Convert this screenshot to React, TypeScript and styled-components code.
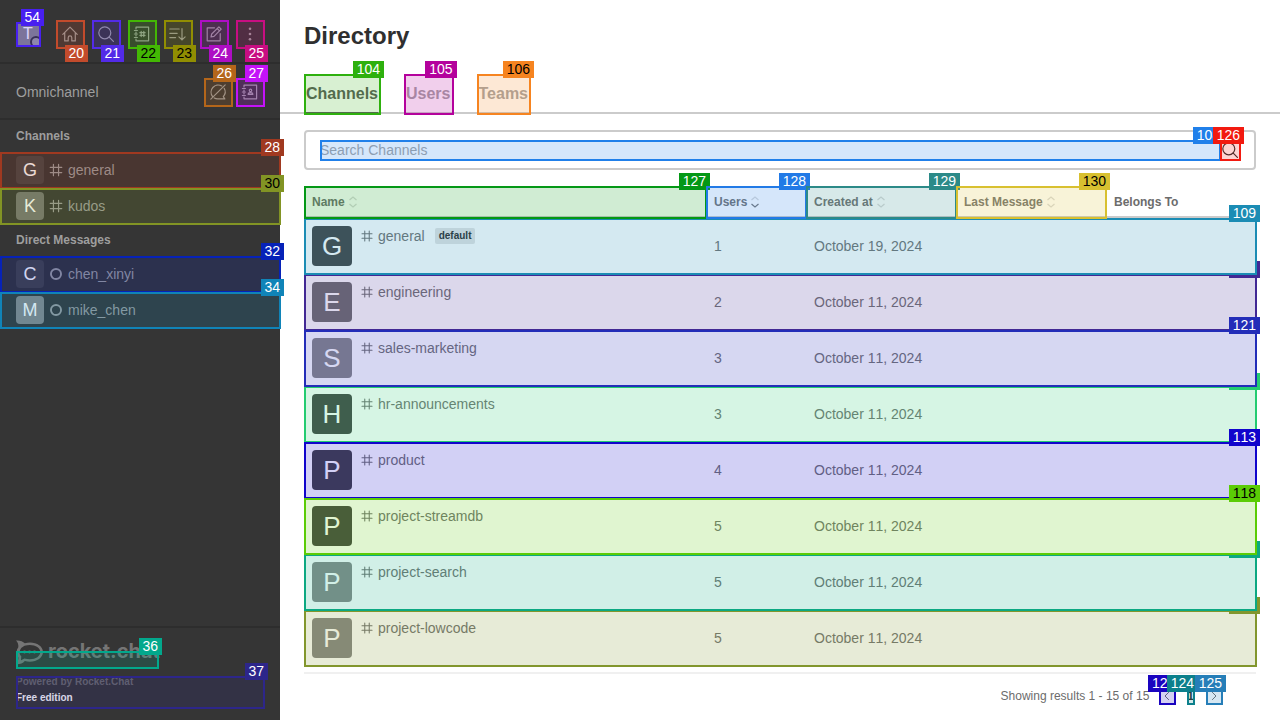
import React from "react";
import styled, { createGlobalStyle, css } from "styled-components";

const GlobalStyle = createGlobalStyle`
  *, *::before, *::after { box-sizing: border-box; }
  body {
    margin: 0;
    background: #ffffff;
    color: #6c6c6c;
    font-family: "Liberation Sans", Arial, sans-serif;
    font-size: 14px;
    line-height: 20px;
  }
  button, input { font: inherit; color: inherit; }
  a { color: inherit; text-decoration: none; }
`;

/* ---------- numbered markers ---------- */

type Side = "above" | "below";

const Outline = styled.span<{ $rgb: string; $top: number }>`
  position: absolute;
  top: ${(p) => p.$top}px;
  right: -1px;
  bottom: -1px;
  left: 0;
  border: 2px solid rgb(${(p) => p.$rgb});
  background: rgba(${(p) => p.$rgb}, 0.19);
  pointer-events: none;
`;

const Tag = styled.span<{ $rgb: string; $dark: boolean; $side: Side; $wide: boolean }>`
  position: absolute;
  right: -5px;
  ${(p) => (p.$side === "above" ? css`bottom: calc(100% - 2px);` : css`top: calc(100% - 2px);`)}
  height: 17px;
  padding: 0 4px 0 ${(p) => (p.$wide ? 4 : 3)}px;
  background: rgb(${(p) => p.$rgb});
  color: ${(p) => (p.$dark ? "#000000" : "#ffffff")};
  font-size: 14px;
  font-weight: 400;
  font-kerning: none;
  line-height: 17px;
  white-space: nowrap;
`;

type MarkProps = { n: number; rgb: string; dark?: boolean; side?: Side; top?: number };

const Mark = ({ n, rgb, dark = false, side = "above", top = 0 }: MarkProps) => (
  <Outline $rgb={rgb} $top={top} aria-hidden="true">
    <Tag $rgb={rgb} $dark={dark} $side={side} $wide={n > 99}>{n}</Tag>
  </Outline>
);

/* ---------- icons ---------- */

const Glyph = styled.svg<{ $size: number }>`
  display: block;
  flex: none;
  width: ${(p) => p.$size}px;
  height: ${(p) => p.$size}px;
  fill: none;
  stroke: currentColor;
  stroke-width: 1.2;
  stroke-linecap: round;
  stroke-linejoin: round;
`;

const icons = {
  home: <path d="M2.8 10.4 10 3.2l7.2 7.2M4.7 8.8v8.1h3.5v-3.2a1.8 1.8 0 0 1 3.6 0v3.2h3.5V8.8" />,
  search: <><circle cx="8.8" cy="8.8" r="6" /><path d="m13.2 13.2 4.2 4.2" /></>,
  directory: (
    <>
      <path d="M4 5V3.2h12.6v13.6H4V15M4 8v1M4 11v1M2.4 6.5h3M2.4 10h3M2.4 13.5h3" />
      <path d="M9.2 7.4v5.2M11.8 7.4v5.2M7.9 8.7h5.2M7.9 11.3h5.2" />
    </>
  ),
  sort: <path d="M1.8 5h9.4M1.8 9.3h7.400M1.8 13.600h5.800M14 4.500v11.4M10.900 12.800 14 15.900l3.100-3.100" />,
  edit: <path d="M10.5 3.8H3.2v13h13V9.5M7 13l.7-3 7.2-7.2 2.3 2.3-7.2 7.2zM13.2 4.5l2.3 2.3" />,
  kebab: (
    <g fill="currentColor" stroke="none">
      <circle cx="10" cy="4.8" r="1.3" /><circle cx="10" cy="10" r="1.3" /><circle cx="10" cy="15.2" r="1.3" />
    </g>
  ),
  chatOff: <path d="M13.800 3.900A7.200 7.200 0 0 0 4.600 14.600M6.200 16a7.200 7.200 0 0 0 3.800.9h6.800l-1.500-2.300a7.200 7.200 0 0 0 .9-8.300M17.200 2.800 2.800 17.200" />,
  contacts: (
    <>
      <path d="M4 5V3.2h12.6v13.6H4V15M4 8v1M4 11v1M2.4 6.5h3M2.4 10h3M2.4 13.5h3" />
      <circle cx="10.5" cy="8.4" r="1.2" /><path d="M8.200 12.400c0-2.400 4.600-2.400 4.600 0z" />
    </>
  ),
  hash: <path d="M6.800 2.800v14.400M13.200 2.800v14.400M2.800 6.800h14.400M2.800 13.200h14.400" strokeWidth="1.500" />,
  offline: <circle cx="10" cy="10" r="6.3" strokeWidth="2.4" />,
  left: <path d="M12 5.5 7.5 10l4.5 4.5" />,
  right: <path d="M8 5.5l4.5 4.5L8 14.5" />,
};

const Icon = ({ name, size = 20 }: { name: keyof typeof icons; size?: number }) => (
  <Glyph $size={size} viewBox="0 0 20 20" aria-hidden="true">{icons[name]}</Glyph>
);

const SortGlyph = styled.svg`
  width: 12px;
  height: 14px;
  fill: none;
  stroke: #6c6c6c;
  stroke-width: 1.2;
`;

const SortIcon = ({ active = false }: { active?: boolean }) => (
  <SortGlyph viewBox="0 0 12 14" aria-hidden="true">
    <path d="M2.5 5 6 2l3.5 3" opacity="0.25" />
    <path d="M2.5 9 6 12l3.5-3" opacity={active ? 0.9 : 0.25} />
  </SortGlyph>
);

/* ---------- shared parts ---------- */

const Avatar = styled.span<{ $size: number; $font: number; $shade: number }>`
  flex: none;
  width: ${(p) => p.$size}px;
  height: ${(p) => p.$size}px;
  border-radius: ${(p) => (p.$size > 24 ? 4 : 2)}px;
  background: rgb(${(p) => `${p.$shade}, ${p.$shade}, ${p.$shade}`});
  color: #ffffff;
  font-size: ${(p) => p.$font}px;
  line-height: ${(p) => p.$size}px;
  text-align: center;
`;

const IconButton = styled.button<{ $size: number }>`
  position: relative;
  display: grid;
  place-items: center;
  flex: none;
  width: ${(p) => p.$size}px;
  height: ${(p) => p.$size}px;
  padding: 0;
  border: 0;
  background: none;
  cursor: pointer;
`;

/* ---------- sidebar ---------- */

const Page = styled.div`
  display: flex;
  min-height: 100vh;
`;

const Sidebar = styled.aside`
  position: relative;
  z-index: 1;
  display: flex;
  flex-direction: column;
  flex: none;
  width: 280px;
  background: #353535;
  color: #9e9e9e;
`;

const TopBar = styled.header`
  display: flex;
  align-items: center;
  justify-content: space-between;
  padding: 20px 16px 16px;
  box-shadow: inset 0 -2px #2d2d2d;
`;

const UserButton = styled.button`
  position: relative;
  display: flex;
  padding: 0;
  border: 0;
  background: none;
`;

const Presence = styled.span`
  position: absolute;
  right: -2px;
  bottom: -2px;
  width: 12px;
  height: 12px;
  border: 2px solid #353535;
  border-radius: 50%;
  background: #9e9e9e;
`;

const Tools = styled.div`
  display: flex;
  gap: 8px;
`;

const Omnichannel = styled.section`
  display: flex;
  align-items: center;
  padding: 14px 16px;
  box-shadow: inset 0 -2px #2d2d2d;
`;

const OmniTitle = styled.span`
  flex: 1;
`;

const OmniTools = styled.div`
  display: flex;
  gap: 4px;
`;

const RoomNav = styled.nav`
  flex: 1;
`;

const GroupTitle = styled.h2`
  margin: 0;
  padding: 6px 16px;
  font-size: 12px;
  line-height: 20px;
`;

const RoomLink = styled.a`
  position: relative;
  display: flex;
  align-items: center;
  gap: 4px;
  height: 36px;
  padding: 0 16px;
`;

const SideFooter = styled.footer`
  padding: 12px 16px;
  border-top: 2px solid #2d2d2d;
`;

const BrandLink = styled.a`
  position: relative;
  display: flex;
  gap: 5px;
  width: 142px;
  height: 28px;
  margin-bottom: 8px;
  color: #757575;
`;

const BrandMark = styled.svg`
  flex: none;
  width: 27px;
  height: 25px;
`;

const BrandName = styled.span`
  font-family: Inter, sans-serif;
  font-size: 20px;
  font-weight: 700;
  line-height: 22px;
`;

const Edition = styled.a`
  position: relative;
  display: flex;
  flex-direction: column;
  gap: 4px;
  padding-bottom: 4px;
  font-size: 10px;
  font-weight: 700;
  line-height: 12px;
`;

const Powered = styled.span`
  color: #6c6c6c;
`;

const EditionName = styled.span`
  color: #ffffff;
`;

/* ---------- directory ---------- */

const Main = styled.main`
  display: flex;
  flex-direction: column;
  flex: 1;
  min-width: 0;
`;

const Title = styled.h1`
  margin: 0;
  padding: 20px 24px 22px;
  color: #2f2f2f;
  font-size: 24px;
  line-height: 32px;
`;

const TabBar = styled.div`
  display: flex;
  gap: 24px;
  padding: 0 24px;
  box-shadow: inset 0 -2px #cbcbcb;
`;

const Tab = styled.button<{ $selected?: boolean }>`
  position: relative;
  height: 40px;
  padding: 0;
  border: 2px solid transparent;
  border-bottom-color: ${(p) => (p.$selected ? "#5c5c5c" : "transparent")};
  background: none;
  color: ${(p) => (p.$selected ? "#5c5c5c" : "#a6a6a6")};
  font-size: 16px;
  font-weight: 700;

  & > span { inset: -2px -3px -3px -2px; }
`;

const Content = styled.div`
  display: flex;
  flex-direction: column;
  flex: 1;
  gap: 16px;
  padding: 16px 24px 6px;
`;

const SearchBox = styled.div`
  display: flex;
  padding: 8px 14px;
  border: 2px solid #cbcbcb;
  border-radius: 4px;
  color: #2f2f2f;
`;

const SearchField = styled.label`
  position: relative;
  display: flex;
  flex: 1;
`;

const SearchInput = styled.input`
  flex: 1;
  min-width: 0;
  height: 20px;
  padding: 0;
  border: 0;
  outline: 0;
  background: none;

  &::placeholder { color: #a6a6a6; opacity: 1; }
`;

const Table = styled.table`
  width: 100%;
  border-spacing: 0;
  table-layout: fixed;
`;

const HeadCell = styled.th<{ $width?: number }>`
  width: ${(p) => (p.$width ? `${p.$width}px` : "auto")};
  height: 32px;
  padding: 0 8px;
  box-shadow: inset 0 -2px #cbcbcb;
  font-size: 12px;
  text-align: left;
`;

const SortableCell = styled(HeadCell)`
  position: relative;
  z-index: 4;
  color: #747474;
`;

const HeadLabel = styled.span`
  display: flex;
  align-items: center;
  gap: 2px;
`;

const Row = styled.tr<{ $level: number }>`
  position: relative;
  z-index: ${(p) => p.$level};
  color: #747474;
`;

const Cell = styled.td`
  height: 56px;
  padding: 8px;
  background: #ffffff;
  font-kerning: none;
`;

const ChannelCell = styled.div`
  display: flex;
  gap: 8px;
`;

const ChannelName = styled.div`
  display: flex;
  align-items: center;
  gap: 4px;
  height: 20px;
`;

const Badge = styled.span`
  margin-left: 6px;
  padding: 0 4px;
  border-radius: 2px;
  background: #e4e4e4;
  color: #2f2f2f;
  font-size: 10px;
  font-weight: 700;
  line-height: 16px;
`;

const Pager = styled.footer`
  display: flex;
  align-items: center;
  justify-content: flex-end;
  gap: 10px;
  height: 48px;
  margin: 0 24px;
  padding: 0 34px 2px 0;
  border-top: 2px solid #f0f0f0;
  font-size: 12px;
`;

const PageNav = styled.nav`
  display: flex;
  gap: 12px;
`;

const PageNumber = styled.button`
  position: relative;
  padding: 0;
  border: 0;
  background: none;
  color: #2f2f2f;
  font-weight: 700;
  line-height: 16px;
`;

/* ---------- data ---------- */

const tools: { icon: keyof typeof icons; label: string; mark: MarkProps }[] = [
  { icon: "home", label: "Home", mark: { n: 20, rgb: "194, 75, 44" } },
  { icon: "search", label: "Search", mark: { n: 21, rgb: "83, 43, 232" } },
  { icon: "directory", label: "Directory", mark: { n: 22, rgb: "67, 184, 4", dark: true } },
  { icon: "sort", label: "Display", mark: { n: 23, rgb: "145, 142, 2", dark: true } },
  { icon: "edit", label: "Create new", mark: { n: 24, rgb: "174, 14, 196" } },
  { icon: "kebab", label: "More", mark: { n: 25, rgb: "200, 14, 130" } },
];

const groups: {
  title: string;
  icon: keyof typeof icons;
  rooms: { name: string; shade: number; mark: MarkProps }[];
}[] = [
  {
    title: "Channels",
    icon: "hash",
    rooms: [
      { name: "general", shade: 70, mark: { n: 28, rgb: "160, 57, 32" } },
      { name: "kudos", shade: 117, mark: { n: 30, rgb: "130, 148, 36", dark: true } },
    ],
  },
  {
    title: "Direct Messages",
    icon: "offline",
    rooms: [
      { name: "chen_xinyi", shade: 70, mark: { n: 32, rgb: "6, 34, 184" } },
      { name: "mike_chen", shade: 136, mark: { n: 34, rgb: "16, 132, 184" } },
    ],
  },
];

const channels: {
  name: string; users: number; date: string; shade: number; level: number; isDefault?: boolean; mark: MarkProps;
}[] = [
  { name: "general", users: 1, date: "October 19, 2024", shade: 70, level: 2, isDefault: true, mark: { n: 109, rgb: "27, 140, 180" } },
  { name: "engineering", users: 2, date: "October 11, 2024", shade: 113, level: 1, mark: { n: 110, rgb: "66, 40, 148" } },
  { name: "sales-marketing", users: 3, date: "October 11, 2024", shade: 137, level: 3, mark: { n: 121, rgb: "35, 45, 184" } },
  { name: "hr-announcements", users: 3, date: "October 11, 2024", shade: 70, level: 1, mark: { n: 111, rgb: "36, 204, 112" } },
  { name: "product", users: 4, date: "October 11, 2024", shade: 70, level: 2, mark: { n: 113, rgb: "17, 4, 204" } },
  { name: "project-streamdb", users: 5, date: "October 11, 2024", shade: 70, level: 3, mark: { n: 118, rgb: "91, 204, 6", dark: true } },
  { name: "project-search", users: 5, date: "October 11, 2024", shade: 138, level: 2, mark: { n: 117, rgb: "12, 168, 130" } },
  { name: "project-lowcode", users: 5, date: "October 11, 2024", shade: 136, level: 1, mark: { n: 116, rgb: "130, 150, 45", dark: true } },
];

export default function App() {
  return (
    <Page>
      <GlobalStyle />
      <Sidebar>
        <TopBar>
          <UserButton aria-label="User menu">
            <Avatar $size={24} $font={16} $shade={136}>T</Avatar>
            <Presence />
            <Mark n={54} rgb="72, 32, 240" />
          </UserButton>
          <Tools>
            {tools.map((t) => (
              <IconButton key={t.label} $size={28} aria-label={t.label}>
                <Icon name={t.icon} />
                <Mark {...t.mark} side="below" />
              </IconButton>
            ))}
          </Tools>
        </TopBar>
        <Omnichannel>
          <OmniTitle>Omnichannel</OmniTitle>
          <OmniTools>
            <IconButton $size={28} aria-label="Turn on answer chats">
              <Icon name="chatOff" />
              <Mark n={26} rgb="180, 102, 26" />
            </IconButton>
            <IconButton $size={28} aria-label="Contact center">
              <Icon name="contacts" />
              <Mark n={27} rgb="196, 18, 248" />
            </IconButton>
          </OmniTools>
        </Omnichannel>
        <RoomNav aria-label="Rooms">
          {groups.map((g) => (
            <React.Fragment key={g.title}>
              <GroupTitle>{g.title}</GroupTitle>
              {g.rooms.map((r) => (
                <RoomLink key={r.name} href={`#${r.name}`}>
                  <Avatar $size={28} $font={18} $shade={r.shade}>{r.name[0].toUpperCase()}</Avatar>
                  <Icon name={g.icon} size={16} />
                  {r.name}
                  <Mark {...r.mark} />
                </RoomLink>
              ))}
            </React.Fragment>
          ))}
        </RoomNav>
        <SideFooter>
          <BrandLink href="#home">
            <BrandMark viewBox="0 0 27 26" preserveAspectRatio="none" aria-hidden="true">
              <path
                fill="currentColor"
                fillRule="evenodd"
                d="M0 .5C3.500 0 6.800 1.300 8.800 3.400C18 .8 27 5.500 27 12.500C27 19.500 18 24.500 8.800 21.800C6.800 24.300 3.500 25.600 0 25.200C2 22.700 2.600 20 2.300 18C0 14.700 0 10.500 2.300 7.500C2.600 5 2 2.500 0 .5ZM5.500 8C2.800 11.500 3.300 15 5.300 17L5 21L8.400 19.200C17 21.800 24.300 18 24.300 12.500C24.300 7.200 17 3.600 8.500 6Z"
              />
              <g fill="currentColor">
                <circle cx="8.500" cy="12.500" r="1.500" />
                <circle cx="13.500" cy="12.500" r="1.500" />
                <circle cx="18.500" cy="12.500" r="1.500" />
              </g>
            </BrandMark>
            <BrandName>rocket.chat</BrandName>
            <Mark n={36} rgb="2, 168, 140" top={11} />
          </BrandLink>
          <Edition href="#edition">
            <Powered>Powered by Rocket.Chat</Powered>
            <EditionName>Free edition</EditionName>
            <Mark n={37} rgb="45, 38, 138" />
          </Edition>
        </SideFooter>
      </Sidebar>

      <Main>
        <Title>Directory</Title>
        <TabBar role="tablist">
          <Tab role="tab" aria-selected="true" $selected>
            Channels
            <Mark n={104} rgb="46, 176, 14" />
          </Tab>
          <Tab role="tab" aria-selected="false">
            Users
            <Mark n={105} rgb="180, 2, 156" />
          </Tab>
          <Tab role="tab" aria-selected="false">
            Teams
            <Mark n={106} rgb="246, 132, 32" dark />
          </Tab>
        </TabBar>
        <Content>
          <SearchBox>
            <SearchField>
              <SearchInput type="text" placeholder="Search Channels" aria-label="Search Channels" />
              <Mark n={108} rgb="32, 128, 234" />
            </SearchField>
            <IconButton $size={20} aria-label="Search">
              <Icon name="search" />
              <Mark n={126} rgb="242, 26, 16" />
            </IconButton>
          </SearchBox>
          <Table>
            <thead>
              <tr>
                <SortableCell>
                  <HeadLabel>Name <SortIcon /></HeadLabel>
                  <Mark n={127} rgb="4, 152, 22" />
                </SortableCell>
                <SortableCell $width={100}>
                  <HeadLabel>Users <SortIcon active /></HeadLabel>
                  <Mark n={128} rgb="34, 122, 230" />
                </SortableCell>
                <SortableCell $width={150}>
                  <HeadLabel>Created at <SortIcon /></HeadLabel>
                  <Mark n={129} rgb="44, 138, 136" />
                </SortableCell>
                <SortableCell $width={150}>
                  <HeadLabel>Last Message <SortIcon /></HeadLabel>
                  <Mark n={130} rgb="216, 192, 48" dark />
                </SortableCell>
                <HeadCell $width={150}>Belongs To</HeadCell>
              </tr>
            </thead>
            <tbody>
              {channels.map((c) => (
                <Row key={c.name} $level={c.level}>
                  <Cell>
                    <ChannelCell>
                      <Avatar $size={40} $font={26} $shade={c.shade}>{c.name[0].toUpperCase()}</Avatar>
                      <ChannelName>
                        <Icon name="hash" size={14} />
                        {c.name}
                        {c.isDefault && <Badge>default</Badge>}
                      </ChannelName>
                    </ChannelCell>
                  </Cell>
                  <Cell>{c.users}</Cell>
                  <Cell>{c.date}</Cell>
                  <Cell />
                  <Cell>
                    <Mark {...c.mark} />
                  </Cell>
                </Row>
              ))}
            </tbody>
          </Table>
        </Content>
        <Pager>
          <span>Showing results 1 - 15 of 15</span>
          <PageNav aria-label="Pages">
            <IconButton $size={16} aria-label="Previous page">
              <Icon name="left" size={16} />
              <Mark n={123} rgb="26, 4, 192" />
            </IconButton>
            <PageNumber>
              1
              <Mark n={124} rgb="12, 128, 140" />
            </PageNumber>
            <IconButton $size={16} aria-label="Next page">
              <Icon name="right" size={16} />
              <Mark n={125} rgb="38, 126, 184" />
            </IconButton>
          </PageNav>
        </Pager>
      </Main>
    </Page>
  );
}
